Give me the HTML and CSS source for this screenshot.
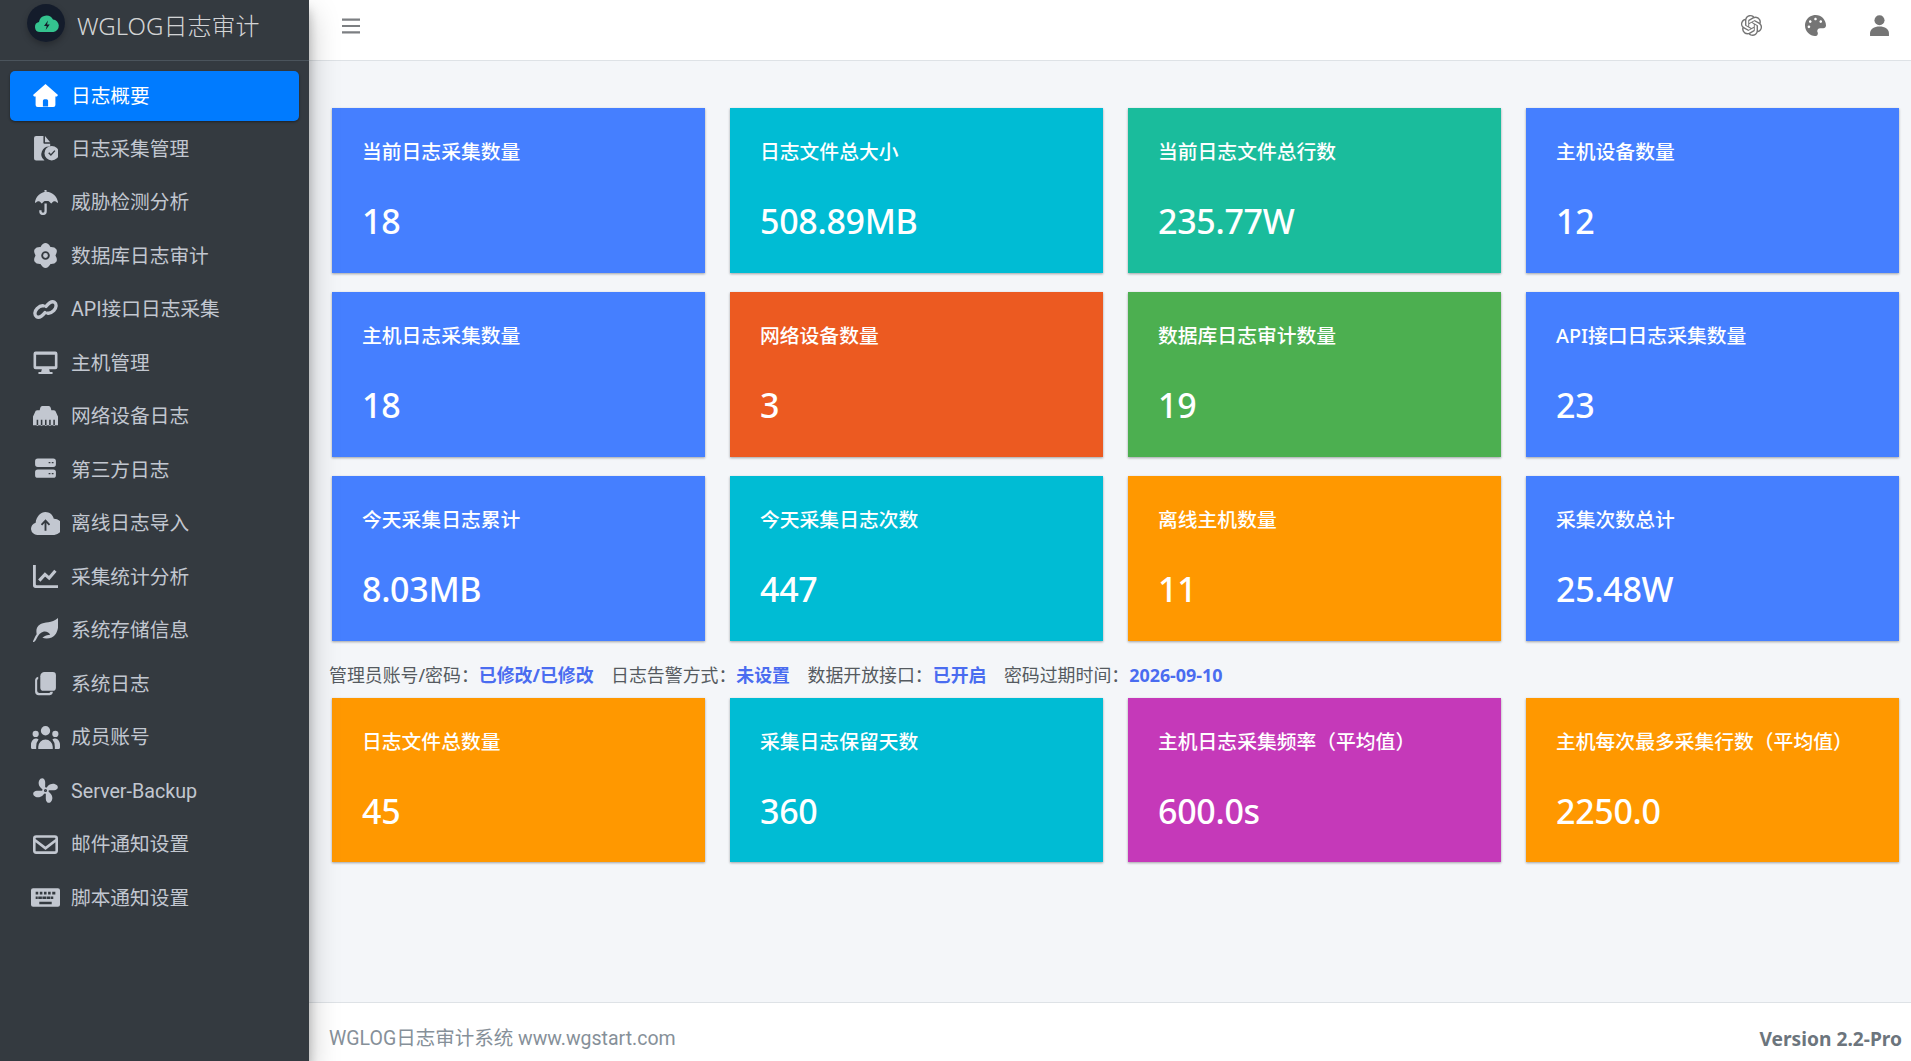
FILE: index.html
```html
<!DOCTYPE html>
<html lang="zh-CN">
<head>
<meta charset="utf-8">
<title>WGLOG日志审计</title>
<link rel="stylesheet" href="styles.css">
</head>
<body>
<div class="app">
  <aside class="sidebar">
    <div class="brand">
      <span class="logo">
        <svg viewBox="0 0 38 38" class="logo-svg"><circle cx="19" cy="19" r="19" fill="#141c2b"/><path d="M13 28a5 5 0 0 1-1-9.900A7.500 7.500 0 0 1 26 15.500a6.300 6.300 0 0 1 .5 12.500Z" fill="#34c38f"/><path d="M21 16.500l-4 5.500h2.700l-1 4 4-5.500H20z" fill="#141c2b"/></svg>
      </span>
      <span class="brand-text">WGLOG日志审计</span>
    </div>
    <nav class="menu">
      <a class="item active"><svg class="ic" viewBox="0 0 24 24"><path fill-rule="evenodd" d="M12 1l12 10.500-1 1.500h-1.500v8a2 2 0 0 1-2 2h-15a2 2 0 0 1-2-2v-8H1l-1-1.500zM9.500 22.500h5V17a1.500 1.500 0 0 0-1.500-1.500h-2A1.500 1.500 0 0 0 9.500 17z"/></svg><span>日志概要</span></a>
      <a class="item"><svg class="ic" viewBox="0 0 24 24"><path d="M3 0h7v6.500a1 1 0 0 0 1 1h5.500v2.600A7.500 7.500 0 0 0 11 23.500H3a2 2 0 0 1-2-2V2a2 2 0 0 1 2-2zM11.500 0l5 6h-5z"/><path fill-rule="evenodd" d="M18 11a7 7 0 1 1 0 14 7 7 0 0 1 0-14zm-3.400 7l2.600 2.800 4.300-4.800-1-.9-3.300 3.700-1.600-1.700z" transform="translate(0 -1.500)"/></svg><span>日志采集管理</span></a>
      <a class="item"><svg class="ic" viewBox="0 0 24 24"><path d="M11 1.600V0h2v1.600c5.800.5 10.300 4.600 11 10 .1.600-.6 1-1 .5-1.400-1.900-3.500-1.900-4.900.4-.3.500-.9.500-1.200 0-.8-1.400-2-2-3-2h-1.900c-1 0-2.200.6-3 2-.3.500-.9.500-1.200 0-1.400-2.300-3.500-2.300-4.900-.4-.4.500-1.100.1-1-.5.700-5.400 5.200-9.500 11-10z"/><path d="M11 13h2.200v7.500a3.600 3.600 0 0 1-7.200 0v-1h2.200v1a1.400 1.400 0 0 0 2.800 0z"/></svg><span>威胁检测分析</span></a>
      <a class="item"><svg class="ic" viewBox="0 0 24 24"><ellipse cx="12" cy="12" rx="6.500" ry="12"/><ellipse cx="12" cy="12" rx="6.500" ry="12" transform="rotate(60 12 12)"/><ellipse cx="12" cy="12" rx="6.500" ry="12" transform="rotate(120 12 12)"/><circle class="ic-hole" cx="12" cy="12" r="3.200"/></svg><span>数据库日志审计</span></a>
      <a class="item"><svg class="ic" viewBox="0 0 24 24"><g fill="none" stroke="currentColor" stroke-width="3.200" stroke-linecap="round"><path d="M12.500 9c2.500-3 5.500-5.500 8-4 2.500 1.600 2 5.500-.5 8-1.800 1.700-4 3-6 2.500"/><path d="M11.500 15c-2.500 3-5.500 5.500-8 4-2.500-1.600-2-5.500.5-8 1.800-1.700 4-3 6-2.500"/></g></svg><span>API接口日志采集</span></a>
      <a class="item"><svg class="ic" viewBox="0 0 24 24"><path fill-rule="evenodd" d="M2.500 1.500h19a2 2 0 0 1 2 2v13a2 2 0 0 1-2 2h-6l.7 2.500H18a1 1 0 0 1 0 2H6a1 1 0 0 1 0-2h1.800l.7-2.500h-6a2 2 0 0 1-2-2v-13a2 2 0 0 1 2-2zm.5 3v11h18v-11z"/></svg><span>主机管理</span></a>
      <a class="item"><svg class="ic" viewBox="0 0 24 24"><path fill-rule="evenodd" d="M7 3.500a2 2 0 0 1 2-1.500h6a2 2 0 0 1 2 1.500l.6 2.500H20a2 2 0 0 1 2 1.700l1.500 3.300a2 2 0 0 1 .5 1.500v8h-24v-8a2 2 0 0 1 .5-1.500L2 7.700A2 2 0 0 1 4 6h2.400zM3.500 15v6h1.500v-6zm4 0v6H9v-6zm4 0v6h1.500v-6zm4 0v6H17v-6zm4 0v6H21v-6z"/></svg><span>网络设备日志</span></a>
      <a class="item"><svg class="ic" viewBox="0 0 24 24"><path fill-rule="evenodd" d="M4.500 1.500h15a2.500 2.500 0 0 1 2.500 2.500v3a2.500 2.500 0 0 1-2.500 2.500h-15A2.500 2.500 0 0 1 2 7V4a2.500 2.500 0 0 1 2.500-2.500zm10.500 3.200v1.300h1.700V4.700zm3 0v1.300h1.700V4.700zM4.500 12h15a2.500 2.500 0 0 1 2.500 2.500v3a2.500 2.500 0 0 1-2.500 2.500h-15A2.500 2.500 0 0 1 2 17.500v-3A2.500 2.500 0 0 1 4.500 12zm10.500 3.300v1.300h1.700v-1.300zm3 0v1.300h1.700v-1.300z"/></svg><span>第三方日志</span></a>
      <a class="item"><svg class="ic wide" viewBox="0 0 28 24"><path fill-rule="evenodd" d="M6 23a6 6 0 0 1-1.500-11.800C5 5.500 9.500 1 14 1c3.800 0 7 2.700 8 6.300A6 6 0 0 1 22.500 23zm8-15l-4.500 4.800 1.300 1.200 2.300-2.400V19h1.800v-7.400l2.300 2.400 1.300-1.200z"/></svg><span>离线日志导入</span></a>
      <a class="item"><svg class="ic" viewBox="0 0 24 24"><path d="M0 1h2.700v18.500a1 1 0 0 0 1 1H24V23H2.500A2.500 2.500 0 0 1 0 20.500z"/><path d="M6 16l5.500-6 4 3.500 6-7" fill="none" stroke="currentColor" stroke-width="3"/></svg><span>采集统计分析</span></a>
      <a class="item"><svg class="ic" viewBox="0 0 24 24"><path d="M24 0c.5 6 .5 11.500-2 15-3 4.500-8.500 5.500-13 4 2-2 5-3 7.500-3-.7-1.500-3.500-3.500-6-3-3.300.600-5.500 3.500-7.500 7.700-.4.900-1.400 2.300-2.500 2.300-.5 0-.7-.5-.4-1 1.100-2.500 2-4.500 3.400-6.500C3 12 2.800 8.500 7 6c4-2.400 11-.8 17-6z"/></svg><span>系统存储信息</span></a>
      <a class="item"><svg class="ic" viewBox="0 0 24 24"><path d="M11 1h8a3 3 0 0 1 3 3v12a3 3 0 0 1-3 3h-9a3 3 0 0 1-3-3V5a4 4 0 0 1 4-4z"/><path d="M5 5.500v2.200A1.500 1.500 0 0 0 4 9v10a2 2 0 0 0 2 2h9.500a1.500 1.500 0 0 0 1.300-1h2.300a3.500 3.500 0 0 1-3.100 3.300H5.500A3.500 3.500 0 0 1 2 20V8.500a3.500 3.500 0 0 1 3-3z"/></svg><span>系统日志</span></a>
      <a class="item"><svg class="ic wide" viewBox="0 0 28 24"><circle cx="14" cy="5.500" r="4.500"/><circle cx="4.500" cy="8.500" r="3"/><circle cx="23.500" cy="8.500" r="3"/><path d="M7 21a7 7 0 0 1 14 0v2H7zM0 19c0-3 2-6 4.500-6 1.200 0 2 .4 2.800 1A10 10 0 0 0 5 21v2H1a1 1 0 0 1-1-1zM28 19c0-3-2-6-4.500-6-1.200 0-2 .4-2.800 1A10 10 0 0 1 23 21v2h4a1 1 0 0 0 1-1z"/></svg><span>成员账号</span></a>
      <a class="item"><svg class="ic" viewBox="0 0 24 24"><g transform="rotate(-35 12 12)"><path d="M12 11.500C8 8 9 1 14.500 0c2.800 0 3.300 2.800 2 5-1.200 2-3 4-4.500 6.500z"/><path d="M12.500 12C16 8 23 9 24 14.500c0 2.800-2.800 3.300-5 2-2-1.200-4-3-6.500-4.500z"/><path d="M12 12.500c4 3.500 3 10.500-2.500 11.500-2.800 0-3.300-2.800-2-5 1.200-2 3-4 4.500-6.500z"/><path d="M11.500 12C8 16 1 15 0 9.500c0-2.800 2.800-3.300 5-2 2 1.200 4 3 6.500 4.500z"/><circle cx="12" cy="12" r="3"/></g><circle class="ic-hole" cx="12" cy="12" r=".6"/></svg><span>Server-Backup</span></a>
      <a class="item"><svg class="ic" viewBox="0 0 24 24"><path fill-rule="evenodd" d="M3 3h18a3 3 0 0 1 3 3v12a3 3 0 0 1-3 3H3a3 3 0 0 1-3-3V6a3 3 0 0 1 3-3zm-.5 3.300v.5L12 14l9.500-7.200v-.5a.8.8 0 0 0-.8-.8H3.300a.8.800 0 0 0-.8.800zm0 3.600v8.100c0 .3.300.5.500.5h18c.2 0 .5-.2.500-.5V9.900L12 17.200z"/></svg><span>邮件通知设置</span></a>
      <a class="item"><svg class="ic wide" viewBox="0 0 28 24"><path fill-rule="evenodd" d="M2 3h24a2 2 0 0 1 2 2v14a2 2 0 0 1-2 2H2a2 2 0 0 1-2-2V5a2 2 0 0 1 2-2zm2.500 3.500v2.500h2.500V6.500zm4 0v2.500H11V6.500zm4 0v2.500H15V6.500zm4 0v2.500H19V6.500zm4 0v2.500h3V6.500zm-14 4.500v2.500H11V11zm4 0v2.500H15V11zm4 0v2.500H19V11zm4 0v2.500h3V11zM8 16v2.500h12V16zM4.500 11v2.500H7V11z"/></svg><span>脚本通知设置</span></a>
    </nav>
  </aside>
  <div class="main">
    <header class="topbar">
      <svg class="bars" viewBox="0 0 18 16"><path d="M0 .5h18v2.200H0zM0 6.900h18v2.200H0zM0 13.300h18v2.200H0z"/></svg>
      <div class="top-icons">
        <svg class="top-ic" viewBox="0 0 16 16"><path d="M14.949 6.547a3.94 3.94 0 0 0-.348-3.273 4.11 4.11 0 0 0-4.4-1.934A4.1 4.1 0 0 0 8.423.2 4.15 4.15 0 0 0 6.305.086a4.1 4.1 0 0 0-1.891.948 4.04 4.04 0 0 0-1.158 1.753 4.1 4.1 0 0 0-1.563.679A4 4 0 0 0 .554 4.72a3.99 3.99 0 0 0 .502 4.731 3.94 3.94 0 0 0 .346 3.274 4.11 4.11 0 0 0 4.402 1.933c.382.425.852.764 1.377.995.526.231 1.095.35 1.67.346 1.78.002 3.358-1.132 3.901-2.804a4.1 4.1 0 0 0 1.563-.68 4 4 0 0 0 1.14-1.253 3.99 3.99 0 0 0-.506-4.716m-6.097 8.406a3.05 3.05 0 0 1-1.945-.694l.096-.054 3.23-1.838a.53.53 0 0 0 .265-.455v-4.49l1.366.778q.02.011.025.035v3.722c-.003 1.653-1.361 2.993-3.037 2.996m-6.53-2.750a2.950 2.950 0 0 1-.36-2.010l.095.057L5.290 12.090a.53.53 0 0 0 .527 0l3.949-2.246v1.555a.05.05 0 0 1-.022.041L6.473 13.300c-1.454.826-3.311.335-4.150-1.098m-.85-6.940A3.020 3.020 0 0 1 3.070 3.949v3.785a.51.51 0 0 0 .262.451l3.930 2.237-1.366.779a.05.05 0 0 1-.048 0L2.585 9.342a2.980 2.980 0 0 1-1.113-4.094zm11.216 2.571L8.747 5.576l1.362-.776a.05.05 0 0 1 .048 0l3.265 1.860a3 3 0 0 1 1.173 1.207 2.960 2.960 0 0 1-.27 3.200 3.050 3.050 0 0 1-1.360.997V8.279a.52.52 0 0 0-.276-.445m1.360-2.015-.097-.057-3.226-1.855a.53.53 0 0 0-.53 0L6.249 6.153V4.598a.04.04 0 0 1 .019-.04L9.533 2.700a3.070 3.070 0 0 1 3.257.139c.474.325.843.778 1.066 1.303.223.526.289 1.103.191 1.664zM5.503 8.575 4.139 7.800a.05.05 0 0 1-.026-.037V4.049c0-.57.166-1.127.476-1.607s.752-.864 1.275-1.105a3.080 3.080 0 0 1 3.234.41l-.096.054-3.230 1.838a.53.53 0 0 0-.265.455zm.742-1.577 1.758-1 1.762 1v2l-1.755 1-1.762-1z"/></svg>
        <svg class="top-ic" viewBox="0 0 512 512"><path d="M204.300 5C104.900 24.400 24.800 104.300 5.200 203.400c-37 187 131.700 326.400 258.800 306.700 41.200-6.400 61.400-54.600 42.500-91.700-23.100-45.400 9.900-98.400 60.900-98.400h79.700c35.800 0 64.800-29.600 64.900-65.300C511.500 97.100 368.100-26.900 204.300 5zM96 320c-17.700 0-32-14.300-32-32s14.300-32 32-32 32 14.300 32 32-14.300 32-32 32zm32-128c-17.700 0-32-14.300-32-32s14.300-32 32-32 32 14.300 32 32-14.300 32-32 32zm128-64c-17.700 0-32-14.300-32-32s14.300-32 32-32 32 14.300 32 32-14.300 32-32 32zm128 64c-17.700 0-32-14.300-32-32s14.300-32 32-32 32 14.300 32 32-14.300 32-32 32z"/></svg>
        <svg class="top-ic" viewBox="0 0 20 20"><circle cx="10" cy="5" r="4.800"/><path d="M1 20v-2.500C1 13.500 5 11 10 11s9 2.500 9 6.500V20z"/></svg>
      </div>
    </header>
    <main class="content">
      <section class="grid">
        <div class="card blue"><div class="card-title">当前日志采集数量</div><div class="card-value">18</div></div>
        <div class="card cyan"><div class="card-title">日志文件总大小</div><div class="card-value">508.89MB</div></div>
        <div class="card teal"><div class="card-title">当前日志文件总行数</div><div class="card-value">235.77W</div></div>
        <div class="card blue"><div class="card-title">主机设备数量</div><div class="card-value">12</div></div>
        <div class="card blue"><div class="card-title">主机日志采集数量</div><div class="card-value">18</div></div>
        <div class="card red"><div class="card-title">网络设备数量</div><div class="card-value">3</div></div>
        <div class="card green"><div class="card-title">数据库日志审计数量</div><div class="card-value">19</div></div>
        <div class="card blue"><div class="card-title">API接口日志采集数量</div><div class="card-value">23</div></div>
        <div class="card blue"><div class="card-title">今天采集日志累计</div><div class="card-value">8.03MB</div></div>
        <div class="card cyan"><div class="card-title">今天采集日志次数</div><div class="card-value">447</div></div>
        <div class="card orange"><div class="card-title">离线主机数量</div><div class="card-value">11</div></div>
        <div class="card blue"><div class="card-title">采集次数总计</div><div class="card-value">25.48W</div></div>
      </section>
      <p class="info">
        <span class="info-group">管理员账号/密码：<b>已修改/已修改</b></span>
        <span class="info-group">日志告警方式：<b>未设置</b></span>
        <span class="info-group">数据开放接口：<b>已开启</b></span>
        <span class="info-group">密码过期时间：<b>2026-09-10</b></span>
      </p>
      <section class="grid grid-last">
        <div class="card orange"><div class="card-title">日志文件总数量</div><div class="card-value">45</div></div>
        <div class="card cyan"><div class="card-title">采集日志保留天数</div><div class="card-value">360</div></div>
        <div class="card purple"><div class="card-title">主机日志采集频率（平均值）</div><div class="card-value">600.0s</div></div>
        <div class="card orange"><div class="card-title">主机每次最多采集行数（平均值）</div><div class="card-value">2250.0</div></div>
      </section>
    </main>
    <footer class="footer">
      <span class="footer-text">WGLOG日志审计系统 www.wgstart.com</span>
      <b class="version">Version 2.2-Pro</b>
    </footer>
  </div>
</div>
</body>
</html>
```
FILE: styles.css
```css
* { box-sizing: border-box; }
html, body { margin: 0; height: 100%; overflow: hidden; }
body {
  font-family: "Noto Sans", "Noto Sans CJK SC", sans-serif;
  background: #f4f6f9;
  color: #212529;
}
.app { display: flex; height: 1061px; }
.sidebar {
  width: 309px;
  flex: none;
  background: #343a40;
  color: #c2c7d0;
  box-shadow: 0 14px 28px rgba(0,0,0,.25), 0 10px 10px rgba(0,0,0,.22);
  position: relative;
  z-index: 2;
}
.brand {
  height: 61px;
  border-bottom: 1px solid #4b545c;
  display: flex;
  align-items: flex-start;
  padding-left: 27px;
}
.logo {
  width: 38px;
  height: 38px;
  margin-top: 4px;
  border-radius: 50%;
  box-shadow: 0 3px 6px rgba(0,0,0,.25);
  flex: none;
}
.logo-svg { display: block; width: 38px; height: 38px; }
.brand-text {
  margin-left: 12px;
  font-size: 24px;
  font-weight: 300;
  line-height: 52px;
  color: rgba(255,255,255,.8);
}
.menu {
  padding: 10px 10px 0;
  display: flex;
  flex-direction: column;
  gap: 3.47px;
}
.item {
  height: 50px;
  display: flex;
  align-items: center;
  padding-left: 23px;
  border-radius: 5px;
  font-size: 19.700px;
  color: #c2c7d0;
}
.item span {
  font-family: Roboto, "Noto Sans CJK SC", sans-serif;
  line-height: 28px;
  margin-top: 1px;
}
.item.active {
  background: #007bff;
  color: #fff;
  box-shadow: 0 1px 3px rgba(0,0,0,.2), 0 1px 2px rgba(0,0,0,.24);
}
.ic {
  width: 25px;
  height: 25px;
  flex: none;
  fill: currentColor;
  margin-right: 13px;
  margin-bottom: 1px;
}
.ic.wide { width: 29px; margin-left: -2px; margin-right: 11px; }
.ic-hole { fill: none; stroke: #343a40; stroke-width: 1.800; }
.main { flex: 1; min-width: 0; display: flex; flex-direction: column; }
.topbar {
  height: 61px;
  flex: none;
  background: #fff;
  border-bottom: 1px solid #dee2e6;
  display: flex;
  justify-content: space-between;
  align-items: flex-start;
  padding: 0 21px 0 33px;
}
.bars { width: 18px; height: 16px; margin-top: 18px; fill: #7c7f82; }
.top-icons { display: flex; gap: 43px; padding-top: 15px; }
.top-ic { width: 21px; height: 21px; fill: #757575; }
.content { flex: 1; padding: 47px 12px 0 23px; }
.grid {
  display: grid;
  grid-template-columns: repeat(4, 373px);
  column-gap: 25px;
  row-gap: 19px;
}
.card {
  height: 165px;
  padding: 30px 30px 0;
  color: #fff;
  box-shadow: 0 1px 3px rgba(0,0,0,.12), 0 1px 2px rgba(0,0,0,.24);
}
.grid-last .card { height: 164px; }
.card-title { font-size: 19.800px; line-height: 28px; font-weight: 500; margin-top: -.5px; }
.card-value { font-size: 34px; line-height: 46px; margin-top: 32.500px; font-weight: 500; letter-spacing: -.3px; }
.blue { background: #457fff; }
.cyan { background: #00bcd4; }
.teal { background: #1abc9c; }
.red { background: #ec5a21; }
.green { background: #4caf50; }
.orange { background: #ff9800; }
.purple { background: #c539b9; }
.info {
  height: 57px;
  margin: 0 0 0 -3px;
  display: flex;
  gap: 17.500px;
  align-items: center;
  padding-top: 9px;
  font-size: 17.900px;
  color: #555a60;
  white-space: nowrap;
}
.info b { color: #4a6cf0; font-weight: 700; }
.footer {
  height: 59px;
  flex: none;
  background: #fff;
  border-top: 1px solid #dee2e6;
  display: flex;
  justify-content: space-between;
  align-items: flex-start;
  padding: 22px 9px 0 20px;
  font-size: 19.500px;
  line-height: 28px;
  color: #869099;
}
.footer-text { font-family: Roboto, "Noto Sans CJK SC", sans-serif; }
.version { color: #6c757d; font-weight: 700; font-size: 19.200px; }
```
